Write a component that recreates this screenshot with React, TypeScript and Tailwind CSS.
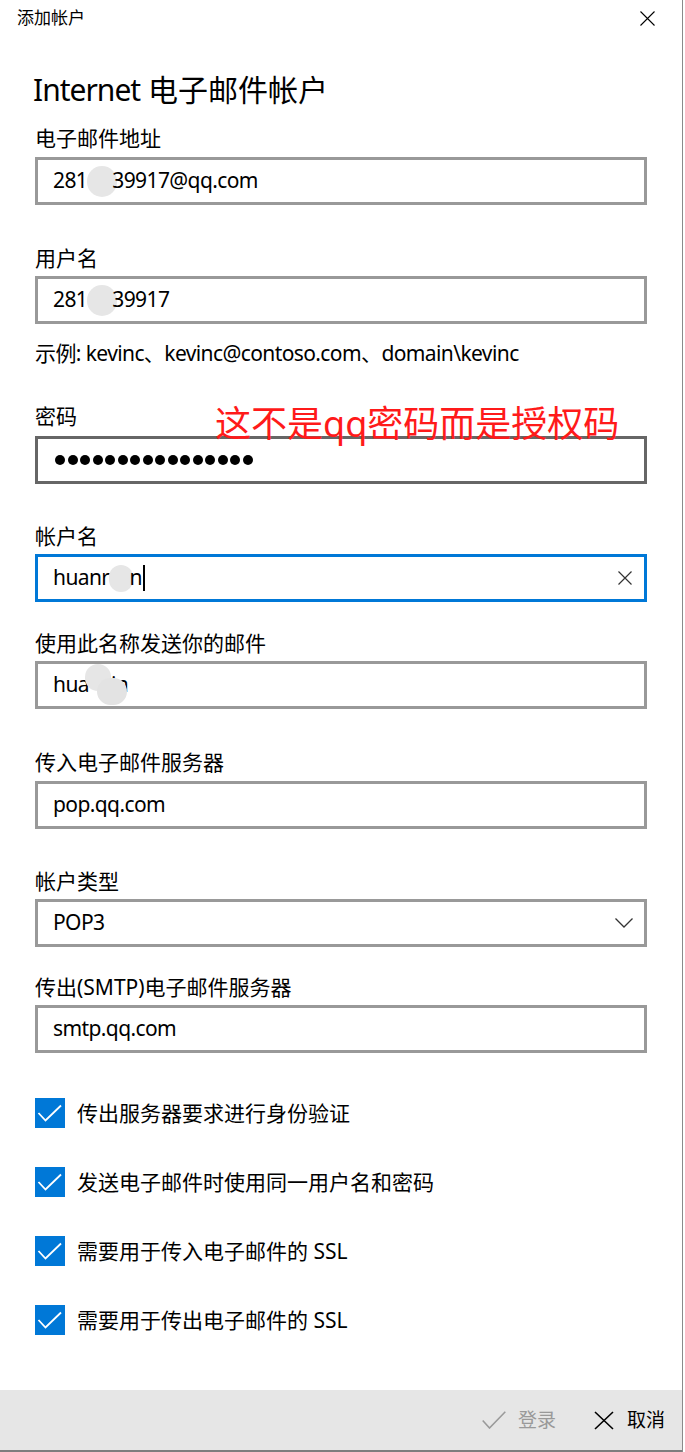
import React from 'react';

const FONT = "font-['Noto_Sans','Noto_Sans_CJK_SC',sans-serif]";

function Label({ children, className = '' }: { children: React.ReactNode; className?: string }) {
  return <div className={`text-[21px] leading-[28px] text-black ${className}`}>{children}</div>;
}

function Box({
  children,
  className = '',
  border = 'border-[#999999]',
}: {
  children: React.ReactNode;
  className?: string;
  border?: string;
}) {
  return (
    <div
      className={`w-[612px] h-[48px] border-[3px] ${border} flex items-center pl-[15px] pr-[11px] text-[21px] tracking-[-0.6px] text-black ${className}`}
    >
      {children}
    </div>
  );
}

function Blob({ className = '' }: { className?: string }) {
  return <span className={`inline-block rounded-full bg-[#e6e6e6] ${className}`} />;
}

function Check({ children, className = '' }: { children: React.ReactNode; className?: string }) {
  return (
    <div className={`flex items-center gap-[12px] ${className}`}>
      <div className="w-[30px] h-[30px] bg-[#0078d7] flex items-center justify-center">
        <svg width="30" height="30" viewBox="0 0 30 30">
          <path d="M3.5 15L10.5 22.5L26 7.5" stroke="#fff" strokeWidth="1.8" fill="none" />
        </svg>
      </div>
      <span className="text-[21px] leading-[28px] text-black">{children}</span>
    </div>
  );
}

export default function App() {
  return (
    <div className={`w-[685px] h-[1452px] bg-white ${FONT}`}>
      <div className="w-[683px] h-[1452px] border-r border-[#8a8a8a] flex flex-col">
        {/* Title bar */}
        <div className="h-[36px] flex items-center justify-between pl-[17px] pr-[27px]">
          <span className="text-[17px] text-black">添加帐户</span>
          <svg width="15" height="15" viewBox="0 0 15 15">
            <path d="M0.5 0.5L14.5 14.5M14.5 0.5L0.5 14.5" stroke="#000" strokeWidth="1.1" />
          </svg>
        </div>

        {/* Form */}
        <div className="flex-1 pl-[35px]">
          <div className="mt-[34px] -ml-[2px] text-[30px] leading-[40px] text-black">
            <span className="tracking-[-1px]">Internet</span> 电子邮件帐户
          </div>

          <Label className="mt-[14px]">电子邮件地址</Label>
          <Box className="mt-[5px]">
            281<Blob className="w-[30px] h-[31px] -mr-[5px]" />39917@qq.com
          </Box>

          <Label className="mt-[39px]">用户名</Label>
          <Box className="mt-[4px]">
            281<Blob className="w-[30px] h-[31px] -mr-[5px]" />39917
          </Box>
          <Label className="mt-[15px] tracking-[-0.6px]">示例: kevinc、kevinc@contoso.com、domain\kevinc</Label>

          <div className="relative mt-[35px]">
            <Label>密码</Label>
            <span className="absolute left-[180px] top-[2px] text-[36px] leading-[40px] text-[#ff1a1a] whitespace-nowrap">
              这不是qq密码而是授权码
            </span>
          </div>
          <Box className="mt-[6px] pl-[17px] gap-[2.5px]" border="border-[#666666]">
            {Array.from({ length: 16 }).map((_, i) => (
              <span key={i} className="w-[10px] h-[10px] rounded-full bg-black" />
            ))}
          </Box>

          <Label className="mt-[38px]">帐户名</Label>
          <Box className="mt-[4px]" border="border-[#0078d7]">
            <span className="flex items-center">
              huanr<Blob className="w-[24px] h-[27px] -mr-[4px]" />n
              <span className="inline-block w-[2px] h-[26px] bg-black ml-[1px]" />
            </span>
            <span className="flex-1" />
            <svg width="14" height="14" viewBox="0 0 14 14" className="mr-[1px]">
              <path d="M0.5 0.5L13.5 13.5M13.5 0.5L0.5 13.5" stroke="#333" strokeWidth="1.2" />
            </svg>
          </Box>

          <Label className="mt-[27px]">使用此名称发送你的邮件</Label>
          <Box className="mt-[4px]">
            hua
            <span className="relative inline-block w-[22px] h-[26px]">
              <span className="absolute -left-[4px] -top-[8px] w-[26px] h-[27px] rounded-full bg-[#e6e6e6]" />
              <span className="absolute left-[8px] top-[6px] w-[30px] h-[27px] rounded-full bg-[#e3e3e3]" />
            </span>
            in
          </Box>

          <Label className="mt-[39px]">传入电子邮件服务器</Label>
          <Box className="mt-[5px]">pop.qq.com</Box>

          <Label className="mt-[38px]">帐户类型</Label>
          <Box className="mt-[4px] justify-between">
            <span>POP3</span>
            <svg width="18" height="10" viewBox="0 0 18 10">
              <path d="M0.5 0.5L9 9L17.5 0.5" stroke="#333" strokeWidth="1.3" fill="none" />
            </svg>
          </Box>

          <Label className="mt-[26px]">传出(SMTP)电子邮件服务器</Label>
          <Box className="mt-[4px]">smtp.qq.com</Box>

          <Check className="mt-[45px]">传出服务器要求进行身份验证</Check>
          <Check className="mt-[39px]">发送电子邮件时使用同一用户名和密码</Check>
          <Check className="mt-[39px]">需要用于传入电子邮件的 SSL</Check>
          <Check className="mt-[39px]">需要用于传出电子邮件的 SSL</Check>
        </div>

        {/* Footer */}
        <div className="h-[62px] bg-[#e6e6e6] border-b-2 border-[#7d7d7d] flex items-center justify-end pr-[17px] gap-[38px]">
          <div className="flex items-center gap-[12px] text-[#999999]">
            <svg width="24" height="18" viewBox="0 0 24 18">
              <path d="M0.7 9.5L7.5 17L23.3 0.7" stroke="#9a9a9a" strokeWidth="1.6" fill="none" />
            </svg>
            <span className="text-[19px]">登录</span>
          </div>
          <div className="flex items-center gap-[13px] text-black">
            <svg width="20" height="19" viewBox="0 0 20 19">
              <path d="M1 1L19 18M19 1L1 18" stroke="#000" strokeWidth="1.6" />
            </svg>
            <span className="text-[19px]">取消</span>
          </div>
        </div>
      </div>
    </div>
  );
}
